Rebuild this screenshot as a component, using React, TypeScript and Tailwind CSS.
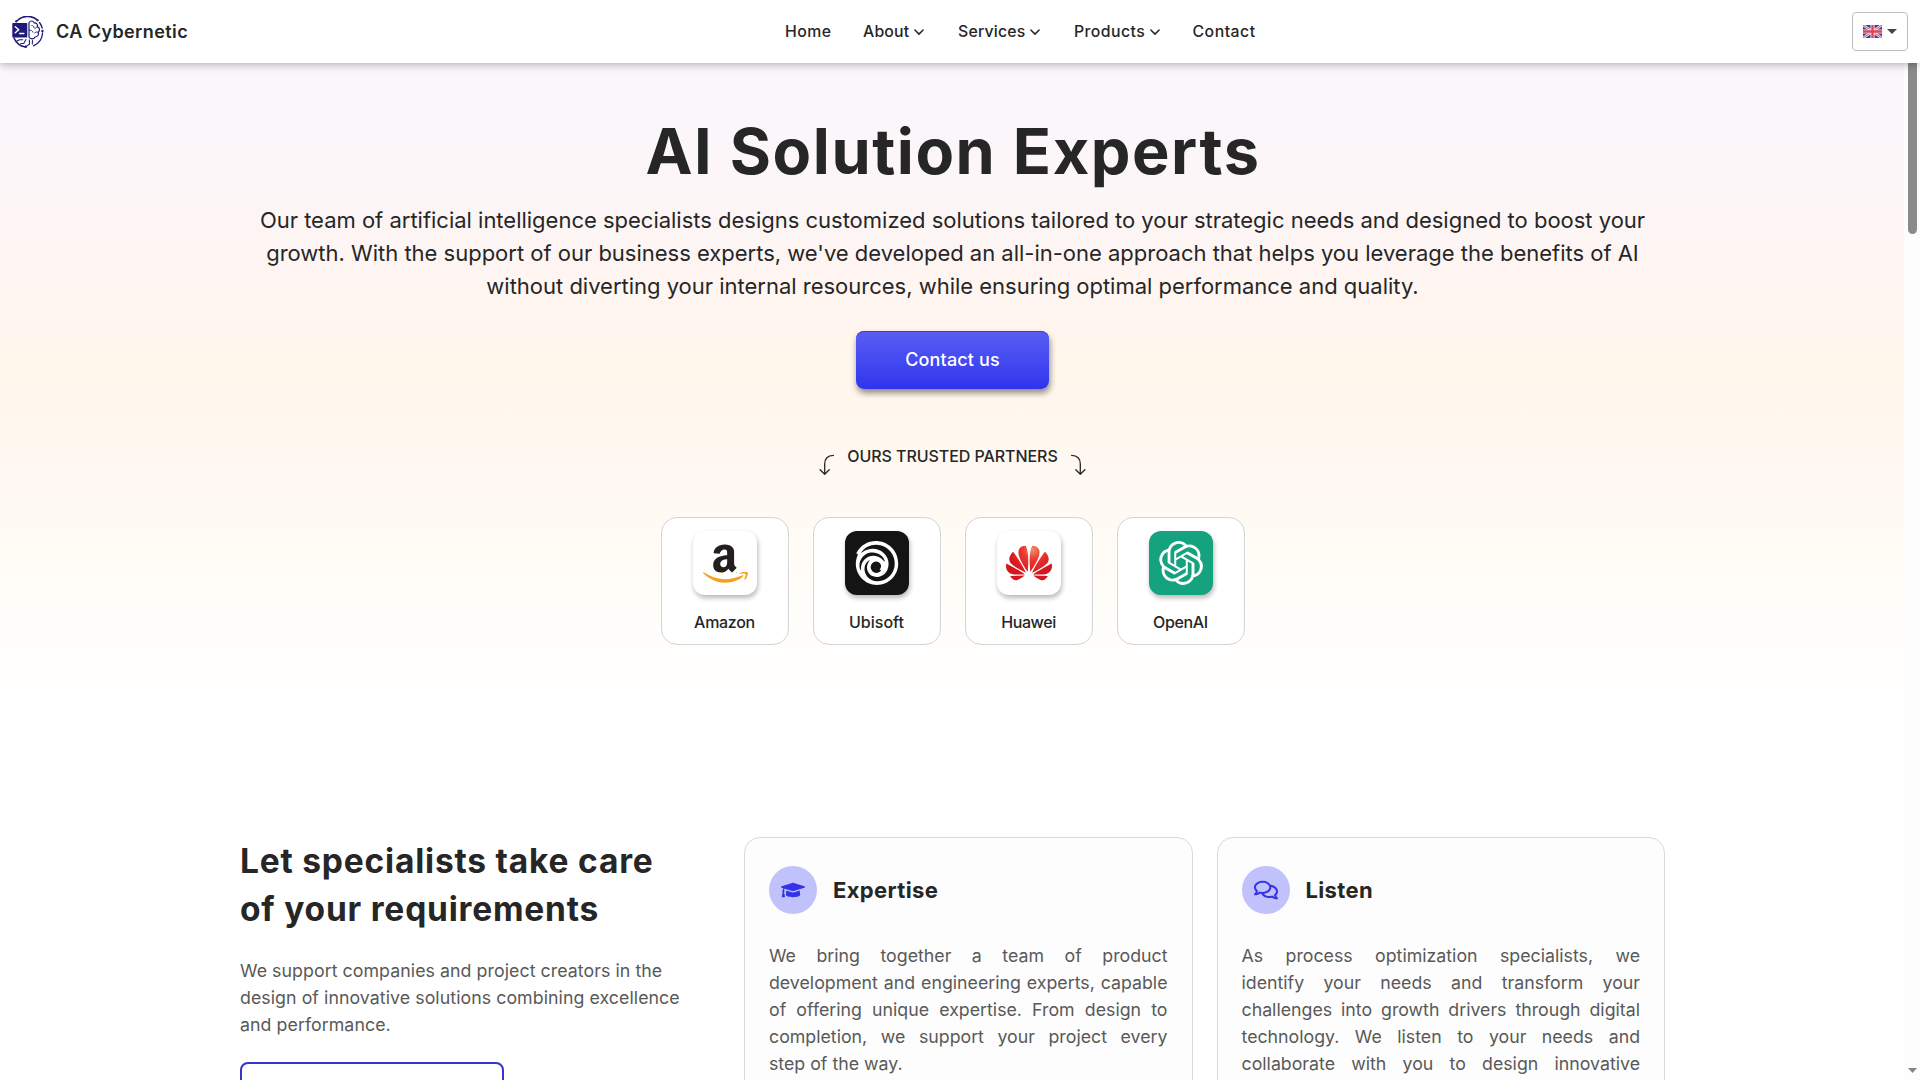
import React from "react";
import { FaAmazon, FaGraduationCap, FaRegComments } from "react-icons/fa";
import { SiHuawei, SiOpenai, SiUbisoft } from "react-icons/si";

function BrandLogo() {
  return (
    <svg viewBox="0 0 32 32" className="h-8 w-8 shrink-0" fill="none" stroke="#1f1a78" strokeLinecap="round">
      <path d="M4.5 5.2A15 15 0 0 1 25.5 4.2" strokeWidth="1.6" />
      <path d="M27.5 6.5A15 15 0 0 1 30.2 12" strokeWidth="1.3" />
      <path d="M30.6 17A15 15 0 0 1 21.5 29.8" strokeWidth="1.3" />
      <path d="M2 22A15 15 0 0 0 13.5 31" strokeWidth="1.6" />
      <circle cx="4.2" cy="5.4" r="1.1" fill="#1f1a78" stroke="none" />
      <circle cx="25.6" cy="4.3" r="1.1" fill="#1f1a78" stroke="none" />
      <circle cx="30.4" cy="15" r="1.2" fill="#1f1a78" stroke="none" />
      <circle cx="13.8" cy="30.8" r="1.2" fill="#1f1a78" stroke="none" />
      <rect x="0.3" y="7" width="15" height="14.5" rx="0.8" fill="#1f1a78" stroke="none" />
      <path d="M3.3 10.8l3.3 3-3.3 3M7.6 17.6h4.2" stroke="#fff" strokeWidth="1.5" />
      <path
        d="M17 21V6.5c1.5-2.3 4.6-1.8 5.2.3 2.3-.2 3.8 1.8 3.2 3.8 2.4 1 2.8 4 .9 5.6.9 2.4-.7 4.8-3.2 4.8-1 2.6-4.6 2.6-6.1 0z"
        strokeWidth="1.2"
      />
      <path d="M19.8 9.5c1.4 0 2.2.8 2.3 2M25.3 11c-1.3.2-2 .8-2.4 1.8M17.4 14.3c1.8-.3 3 .3 3.5 1.9M26 16.3c-1.3-.5-2.4-.3-3.3.6" strokeWidth="0.9" />
      <path d="M4 25.5l3.5-1.8h3.2M8.5 27.8l3.4-.6 2-3.6M17.4 24v4.2l-3 2.2M20.5 24.5l-.2 3.5" strokeWidth="1.1" />
    </svg>
  );
}

function Chevron() {
  return (
    <svg viewBox="0 0 12 8" className="ml-1 h-2 w-3" fill="none" stroke="#262626" strokeWidth="1.5" strokeLinecap="round" strokeLinejoin="round">
      <path d="M1.9 2L6 6.1 10.1 2" />
    </svg>
  );
}

function UnionJack() {
  return (
    <svg viewBox="0 0 60 40" preserveAspectRatio="none" className="h-[13px] w-[19px]">
      <rect width="60" height="40" fill="#3a4190" />
      <path d="M0 0l60 40M60 0L0 40" stroke="#e9e4f0" strokeWidth="8" />
      <path d="M0 0l60 40M60 0L0 40" stroke="#dd4a5f" strokeWidth="3" />
      <path d="M30 0v40M0 20h60" stroke="#f3e6ee" strokeWidth="13" />
      <path d="M30 0v40M0 20h60" stroke="#e0435a" strokeWidth="7.5" />
    </svg>
  );
}

function HookArrow({ flip = false }: { flip?: boolean }) {
  return (
    <svg
      viewBox="0 0 16 21"
      className={flip ? "mt-[9px] h-[21px] w-4 -scale-x-100" : "mt-[9px] h-[21px] w-4"}
      fill="none"
      stroke="#262626"
      strokeWidth="1.3"
      strokeLinecap="round"
      strokeLinejoin="round"
    >
      <path d="M14.4 1.3C9 1.5 5.7 4.8 5.7 10v10M1.1 15.7l4.6 4.5 4.5-4.5" />
    </svg>
  );
}

function AmazonMark() {
  return (
    <div className="flex flex-col items-center pt-[13px]">
      <svg viewBox="86 31 290 340" className="h-[29px] w-6">
        <FaAmazon color="#231f20" style={{ width: 448, height: 512 }} />
      </svg>
      <svg viewBox="6 366 436 116" preserveAspectRatio="none" className="-mt-px h-[11px] w-[45px]">
        <svg x="0" y="0" width="448" height="512">
          <clipPath id="smile">
            <path d="M0 366h300v6h60v-8h88v148H0z" />
          </clipPath>
          <g clipPath="url(#smile)">
            <FaAmazon color="#f5a01f" style={{ width: 448, height: 512 }} />
          </g>
        </svg>
      </svg>
    </div>
  );
}

function HuaweiMark() {
  return (
    <>
      <svg className="absolute h-0 w-0">
        <defs>
          <radialGradient id="petal" gradientUnits="userSpaceOnUse" cx="14" cy="5" r="13">
            <stop offset="0" stopColor="#f58a6c" />
            <stop offset="0.4" stopColor="#ea3a30" />
            <stop offset="1" stopColor="#d3161f" />
          </radialGradient>
        </defs>
      </svg>
      <SiHuawei className="mt-[9px] h-[46px] w-[46px]" fill="url(#petal)" />
    </>
  );
}

const partners = [
  { name: "Amazon", tile: "bg-white", mark: <AmazonMark />, spacing: "tracking-[-0.3px]" },
  { name: "Ubisoft", tile: "bg-[#141414]", mark: <SiUbisoft className="mt-[10px] h-11 w-11 text-white" />, spacing: "tracking-normal" },
  { name: "Huawei", tile: "bg-white", mark: <HuaweiMark />, spacing: "tracking-[-0.4px]" },
  { name: "OpenAI", tile: "bg-[#15a27f]", mark: <SiOpenai className="mt-[10px] h-11 w-11 text-white" />, spacing: "tracking-[-0.35px]" },
];

const navItems = [
  { label: "Home", width: "w-[78px]", menu: false, spacing: "tracking-[0.45px]" },
  { label: "About", width: "w-[95px]", menu: true, spacing: "tracking-[0.2px]" },
  { label: "Services", width: "w-[116px]", menu: true, spacing: "tracking-[0.2px]" },
  { label: "Products", width: "w-[118.5px]", menu: true, spacing: "tracking-[0.45px]" },
  { label: "Contact", width: "w-[80px]", menu: false, spacing: "tracking-[0.5px]" },
];

const features = [
  {
    title: "Expertise",
    icon: <FaGraduationCap className="h-6 w-6" />,
    lines: [
      "We bring together a team of product",
      "development and engineering experts, capable",
      "of offering unique expertise. From design to",
      "completion, we support your project every",
    ],
    lastLine: "step of the way.",
  },
  {
    title: "Listen",
    icon: <FaRegComments className="h-6 w-6" />,
    lines: [
      "As process optimization specialists, we",
      "identify your needs and transform your",
      "challenges into growth drivers through digital",
      "technology. We listen to your needs and",
      "collaborate with you to design innovative",
    ],
  },
];

export default function App() {
  return (
    <div className="flex h-[1080px] w-[1920px] flex-col overflow-hidden bg-white font-['Inter',sans-serif] text-[#262626]">
      <header className="relative z-10 flex h-[63px] shrink-0 items-center bg-white shadow-[0_2px_8px_rgba(0,0,0,0.28)]">
        <div className="flex w-[785px] items-center pl-3">
          <BrandLogo />
          <span className="ml-3 text-[18px] font-semibold tracking-[0.4px]">CA Cybernetic</span>
        </div>
        <nav className="flex text-[15.8px] font-medium">
          {navItems.map((item) => (
            <a key={item.label} className={`flex items-center ${item.width}`}>
              <span className={item.spacing}>{item.label}</span>
              {item.menu && <Chevron />}
            </a>
          ))}
        </nav>
        <button className="mr-3 ml-auto flex h-[39px] w-14 items-center rounded-[4px] border border-[#bfbfbf] pl-[10px]">
          <UnionJack />
          <svg viewBox="0 0 10 5" className="ml-[5px] h-[5px] w-[10px]">
            <path d="M0 0h10L5 5z" fill="#444" />
          </svg>
        </button>
      </header>

      <div className="flex min-h-0 flex-1">
        <main className="w-[1904px] shrink-0 overflow-hidden">
          <section className="flex h-[654px] flex-col items-center bg-[linear-gradient(180deg,#faf6fd_0%,#fcf6f9_14%,#fdf5f5_24%,#fff5f1_35%,#fff6ec_45%,#fff8ef_57%,#fffaf3_68%,#fffdf8_80%,#fffefc_90%,#ffffff_100%)] pt-12 pl-px">
            <h1 className="ml-px text-[63px] leading-[80px] font-bold tracking-[1.55px]">AI Solution Experts</h1>
            <p className="mt-[13px] text-center text-[22px] leading-[33px] tracking-[-0.01px] whitespace-nowrap">
              Our team of artificial intelligence specialists designs customized solutions tailored to your strategic needs and designed to boost your
              <br />
              growth. With the support of our business experts, we've developed an all-in-one approach that helps you leverage the benefits of AI
              <br />
              without diverting your internal resources, while ensuring optimal performance and quality.
            </p>
            <button className="mt-7 h-[58px] w-[193px] rounded-lg bg-gradient-to-b from-[#5b5cf3] to-[#3033ee] pb-0.5 text-[18px] font-medium tracking-[0.13px] text-white shadow-[inset_0_1px_0_#3d3fc9,1px_4px_6px_rgba(0,0,0,0.45)]">
              Contact us
            </button>
            <div className="mt-14 flex h-8 items-start gap-3">
              <HookArrow />
              <span className="-mt-px text-[16px] leading-6 font-medium tracking-[-0.06px]">OURS TRUSTED PARTNERS</span>
              <HookArrow flip />
            </div>
            <div className="mt-10 ml-px flex gap-6">
              {partners.map((partner) => (
                <div key={partner.name} className="flex h-32 w-32 flex-col items-center rounded-2xl border border-[#d4d4d4] bg-white pt-[13px]">
                  <div className={`flex h-16 w-16 shrink-0 items-start justify-center rounded-xl shadow-[1px_3px_5px_rgba(0,0,0,0.28)] ${partner.tile}`}>
                    {partner.mark}
                  </div>
                  <span className={`mt-[15px] mr-px text-[16px] leading-6 font-medium ${partner.spacing}`}>{partner.name}</span>
                </div>
              ))}
            </div>
          </section>

          <section className="flex gap-6 pt-[120px] pl-60">
            <div className="w-[480px]">
              <h2 className="text-[33.5px] leading-[48px] font-bold tracking-[0.8px] whitespace-nowrap">
                Let specialists take care
                <br />
                of your requirements
              </h2>
              <p className="mt-6 text-[17.75px] leading-[27px] tracking-[0.06px] whitespace-nowrap text-[#595959]">
                We support companies and project creators in the
                <br />
                design of innovative solutions combining excellence
                <br />
                and performance.
              </p>
              <div className="mt-6 h-[58px] w-[264px] rounded-lg border-2 border-[#3636cc]" />
            </div>
            {features.map((feature) => (
              <article key={feature.title} className="h-[340px] w-[448.5px] rounded-2xl border border-[#d9d9d9] bg-[#fdfdfd] px-6 pt-7">
                <div className="flex items-center gap-4">
                  <span className="flex h-12 w-12 items-center justify-center rounded-full bg-[#c1c1fb] text-[#3434e6]">{feature.icon}</span>
                  <h3 className="text-[22px] leading-8 font-bold tracking-[0.36px]">{feature.title}</h3>
                </div>
                <div className="mt-7 text-[17.75px] leading-[27px] text-[#595959]">
                  {feature.lines.map((line) => (
                    <p key={line} className="[text-align-last:justify]">
                      {line}
                    </p>
                  ))}
                  {feature.lastLine && <p>{feature.lastLine}</p>}
                </div>
              </article>
            ))}
          </section>
        </main>

        <aside className="flex w-4 flex-col items-center justify-between bg-[#fdfdfd] pl-px">
          <div className="h-[171px] w-[9px] rounded-b-full bg-[#8b8b8b]" />
          <svg viewBox="0 0 9 5" className="mb-[7px] h-[5px] w-[9px]">
            <path d="M0 0h9L4.5 5z" fill="#858585" />
          </svg>
        </aside>
      </div>
    </div>
  );
}
